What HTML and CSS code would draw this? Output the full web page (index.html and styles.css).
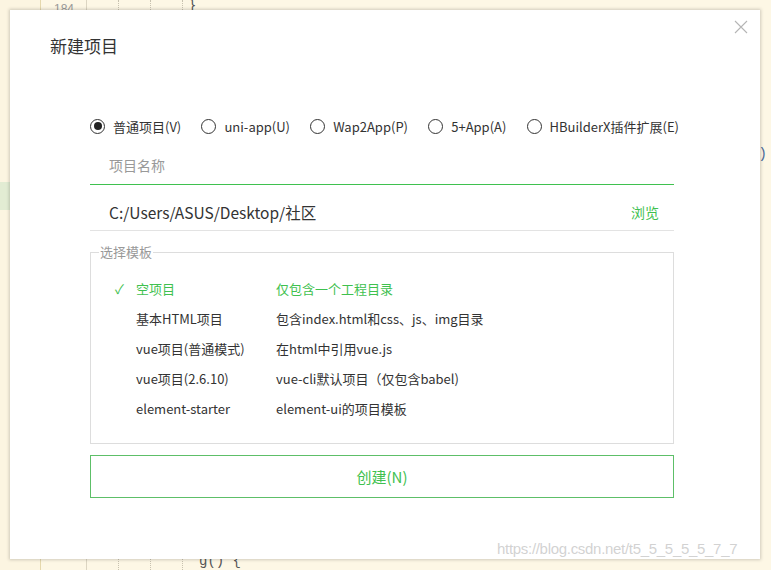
FILE: index.html
```html
<!DOCTYPE html>
<html lang="zh">
<head>
<meta charset="utf-8">
<title>新建项目</title>
<link rel="stylesheet" href="styles.css">
</head>
<body>
<div class="editor">
  <div class="gutter"><div class="hl"></div></div>
  <div class="linenos"><span class="ln">184</span></div>
  <div class="guide"></div>
  <div class="guide"></div>
  <div class="guide g3"></div>
  <div class="code">
    <span class="brace">}</span>
    <span class="paren">)</span>
    <span class="bottom-code">g() {</span>
  </div>
</div>

<div class="dialog">
  <div class="close">
    <svg width="14" height="14" viewBox="0 0 14 14"><path d="M1 1L13 13M13 1L1 13" stroke="#b5b5b5" stroke-width="1.1" fill="none"/></svg>
  </div>
  <h1 class="title">新建项目</h1>

  <div class="types">
    <label class="radio checked"><span class="dot"></span>普通项目(V)</label>
    <label class="radio"><span class="dot"></span>uni-app(U)</label>
    <label class="radio"><span class="dot"></span>Wap2App(P)</label>
    <label class="radio"><span class="dot"></span>5+App(A)</label>
    <label class="radio"><span class="dot"></span>HBuilderX插件扩展(E)</label>
  </div>

  <div class="field name">项目名称</div>
  <div class="field path"><span>C:/Users/ASUS/Desktop/社区</span><span class="browse">浏览</span></div>

  <fieldset class="templates">
    <legend>选择模板</legend>
    <div class="row active"><span class="check">✓</span><span class="c1">空项目</span><span>仅包含一个工程目录</span></div>
    <div class="row"><span class="check"></span><span class="c1">基本HTML项目</span><span>包含index.html和css、js、img目录</span></div>
    <div class="row"><span class="check"></span><span class="c1">vue项目(普通模式)</span><span>在html中引用vue.js</span></div>
    <div class="row"><span class="check"></span><span class="c1">vue项目(2.6.10)</span><span>vue-cli默认项目（仅包含babel)</span></div>
    <div class="row"><span class="check"></span><span class="c1">element-starter</span><span>element-ui的项目模板</span></div>
  </fieldset>

  <button class="create">创建(N)</button>
</div>
<div class="watermark">https://blog.csdn.net/t5_5_5_5_5_7_7</div>
</body>
</html>
```

FILE: styles.css
```css
* { box-sizing: border-box; }
html, body { margin: 0; padding: 0; }
body {
  width: 771px;
  height: 570px;
  overflow: hidden;
  background: #fdf7e5;
  font-family: "Noto Sans CJK SC", "Noto Sans", sans-serif;
  position: relative;
}
.editor {
  display: flex;
  height: 570px;
}
.gutter {
  width: 41px;
  border-right: 1px solid #e5d8ad;
  background: #fcf5e1;
  position: relative;
}
.hl {
  position: absolute;
  left: 0; top: 182px;
  width: 40px; height: 28px;
  background: #e2ecd3;
}
.linenos {
  width: 46px;
  border-right: 1px solid #dcd5c2;
  font-family: "Liberation Sans", sans-serif;
  font-size: 12px;
  color: #999;
  padding: 2px 0 0 13px;
}
.guide {
  width: 32px;
  border-right: 1px dotted #c8c2b0;
}
.guide:first-of-type { width: 42px; }
.code {
  flex: 1;
  position: relative;
  font-family: "Liberation Mono", monospace;
  font-size: 14px;
  color: #555;
}
.brace { position: absolute; left: 5px; top: -2px; }
.paren { position: absolute; right: 4px; top: 146px; color: #4a6a99; }
.bottom-code { position: absolute; left: 16px; top: 553px; color: #555; }

.dialog {
  position: absolute;
  left: 10px; top: 10px;
  width: 750px; height: 549px;
  background: #fff;
  box-shadow: 0 0 3px 1px rgba(0,0,0,0.18);
  padding: 0 86px 0 80px;
}
.close {
  position: absolute;
  right: 12px; top: 10px;
  width: 14px; height: 14px;
  line-height: 0;
}
.title {
  margin: 24px 0 0 -40px;
  font-size: 17px;
  font-weight: normal;
  color: #333;
  line-height: 24px;
}
.types {
  display: flex;
  justify-content: space-between;
  margin-top: 58px;
  margin-right: -5px;
  height: 20px;
  align-items: center;
  font-size: 13px;
  color: #333;
}
.radio {
  display: flex;
  align-items: center;
  white-space: nowrap;
}
.dot {
  width: 15px; height: 15px;
  border: 1.5px solid #333;
  border-radius: 50%;
  margin-right: 8px;
  display: flex;
  align-items: center;
  justify-content: center;
}
.radio.checked .dot::after {
  content: "";
  width: 8px; height: 8px;
  border-radius: 50%;
  background: #222;
}
.field {
  display: flex;
  align-items: center;
  justify-content: space-between;
  padding: 0 15px 0 19px;
  height: 46px;
}
.name {
  height: 49px;
  padding-top: 9px;
  font-size: 14px;
  color: #999;
  border-bottom: 1px solid #3fc14f;
}
.path {
  padding-top: 9px;
  font-size: 15.5px;
  color: #333;
  border-bottom: 1px solid #e3e3e3;
}
.browse { color: #3fc14f; font-size: 14px; }
.templates {
  margin: 14px 0 0;
  padding: 14px 0 22px 24px;
  border: 1px solid #ddd;
  height: 199px;
}
.templates legend {
  font-size: 13px;
  color: #999;
  padding: 0 1px;
  margin-left: -16px;
  line-height: 14px;
}
.row {
  display: flex;
  align-items: center;
  height: 30.2px;
  font-size: 13px;
  color: #333;
}
.row.active { color: #3fc14f; }
.check { width: 21px; font-size: 13px; }
.c1 { width: 140px; }
.create {
  display: block;
  width: 100%;
  margin-top: 11px;
  height: 43px;
  background: #fff;
  border: 1px solid #5dbf68;
  color: #3fc14f;
  font-family: "Noto Sans CJK SC", sans-serif;
  font-size: 15px;
  cursor: pointer;
}
.watermark {
  position: absolute;
  left: 497px; top: 540px;
  font-family: "Liberation Sans Narrow", "Liberation Sans", sans-serif;
  font-size: 15px;
  color: rgba(190,190,190,0.7);
  letter-spacing: -0.3px;
}
```
